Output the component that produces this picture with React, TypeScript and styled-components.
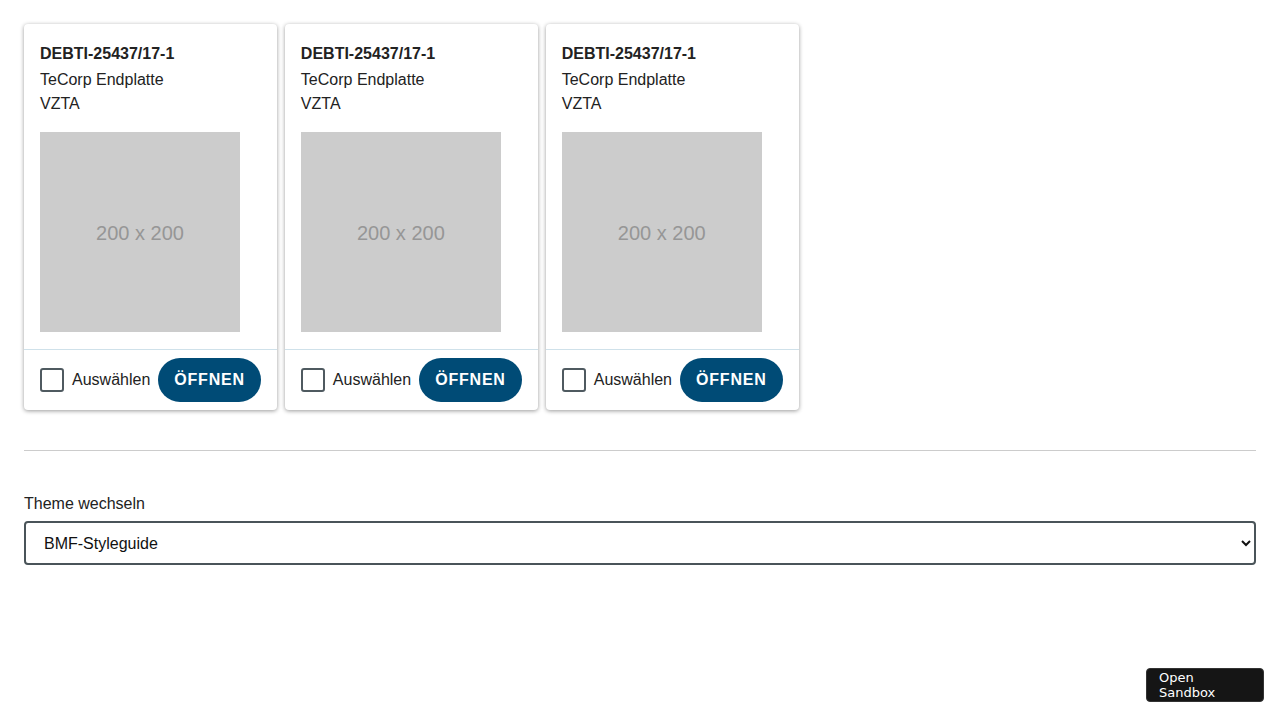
import styled, { createGlobalStyle } from 'styled-components'

const GlobalStyle = createGlobalStyle`
  body {
    margin: 0;
    background: #fff;
    font-family: "Liberation Sans", Arial, sans-serif;
    color: #222;
  }
`

const Page = styled.div`
  padding: 24px;
`

const CardRow = styled.div`
  display: flex;
  align-items: flex-start;
  gap: 8px;
`

const Card = styled.div`
  display: inline-flex;
  flex-direction: column;
  background: #fff;
  border-radius: 4px;
  box-shadow: 0 1px 4px rgba(0, 0, 0, 0.4);
`

const CardBody = styled.div`
  padding: 18px 16px 17px;
`

const Title = styled.div`
  font-size: 16px;
  font-weight: bold;
  line-height: 24px;
  margin-bottom: 2px;
  color: #222;
`

const Line = styled.div`
  font-size: 16px;
  line-height: 24px;
  color: #222;
`

const Placeholder = styled.div`
  margin-top: 16px;
  width: 200px;
  height: 200px;
  box-sizing: border-box;
  padding-top: 2px;
  background: #cccccc;
  color: #969696;
  font-size: 20px;
  display: flex;
  align-items: center;
  justify-content: center;
`

const CardFooter = styled.div`
  display: flex;
  align-items: center;
  gap: 8px;
  padding: 8px 16px;
  border-top: 1px solid #cfe1ea;
`

const CheckLabel = styled.label`
  display: flex;
  align-items: center;
  gap: 8px;
  font-size: 16px;
  color: #222;
  cursor: pointer;
`

const Box = styled.span`
  width: 24px;
  height: 24px;
  box-sizing: border-box;
  border: 2px solid #4f5a60;
  border-radius: 3px;
`

const OpenButton = styled.button`
  height: 44px;
  padding: 0 16px;
  border: none;
  border-radius: 22px;
  background: #004b76;
  color: #fff;
  font-family: "Liberation Sans", Arial, sans-serif;
  font-size: 16px;
  font-weight: bold;
  letter-spacing: 0.8px;
  text-transform: uppercase;
  cursor: pointer;
`

const Divider = styled.hr`
  margin: 40px 0 43px;
  border: none;
  border-top: 1px solid #cccccc;
`

const FieldLabel = styled.label`
  display: block;
  font-size: 16px;
  line-height: 20px;
  margin-bottom: 7px;
  color: #222;
`

const Select = styled.select`
  width: 100%;
  height: 44px;
  box-sizing: border-box;
  padding: 0 14px;
  border: 2px solid #4a5459;
  border-radius: 4px;
  background: #fff;
  font-family: "Liberation Sans", Arial, sans-serif;
  font-size: 16px;
  color: #111;
`

const SandboxButton = styled.button`
  position: fixed;
  right: 16px;
  bottom: 18px;
  width: 118px;
  height: 34px;
  padding: 0 12px;
  background: #151515;
  color: #fff;
  border: 1px solid #333;
  border-radius: 4px;
  font-family: "DejaVu Sans", sans-serif;
  font-size: 13px;
  line-height: 15px;
  text-align: left;
`

const items = [1, 2, 3]

export default function App() {
  return (
    <Page>
      <GlobalStyle />
      <CardRow>
        {items.map(i => (
          <Card key={i}>
            <CardBody>
              <Title>DEBTI-25437/17-1</Title>
              <Line>TeCorp Endplatte</Line>
              <Line>VZTA</Line>
              <Placeholder>200 x 200</Placeholder>
            </CardBody>
            <CardFooter>
              <CheckLabel>
                <Box />
                Auswählen
              </CheckLabel>
              <OpenButton>Öffnen</OpenButton>
            </CardFooter>
          </Card>
        ))}
      </CardRow>
      <Divider />
      <FieldLabel>Theme wechseln</FieldLabel>
      <Select defaultValue="bmf">
        <option value="bmf">BMF-Styleguide</option>
      </Select>
      <SandboxButton>Open Sandbox</SandboxButton>
    </Page>
  )
}
